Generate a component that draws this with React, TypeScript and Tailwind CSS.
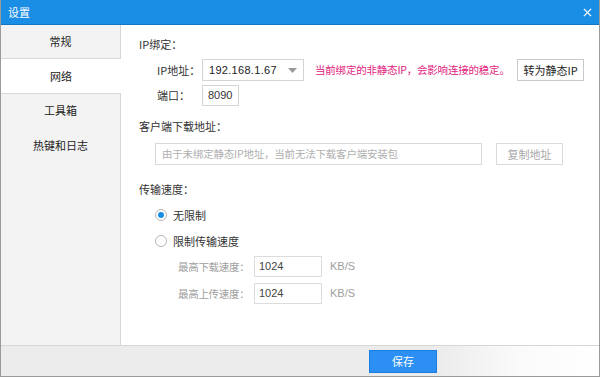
import React from "react";

const font = { fontFamily: '"Microsoft YaHei","Noto Sans CJK SC",sans-serif' };
const latin = { fontFamily: '"Liberation Sans",sans-serif' };

export default function App() {
  return (
    <div
      className="w-[600px] h-[377px] flex flex-col bg-white text-[11px] text-[#333] overflow-hidden border-l border-b border-r border-[#9a9a9a] whitespace-nowrap"
      style={font}
    >
      {/* Title bar */}
      <div className="h-[25px] shrink-0 bg-[#1a8de5] flex items-center justify-between pl-[7px] pr-[7px] text-white border-b border-[#1577c4]">
        <span className="text-[11px]">设置</span>
        <svg width="9" height="9" viewBox="0 0 10 10">
          <path d="M1 1 L9 9 M9 1 L1 9" stroke="white" strokeWidth="1.4" />
        </svg>
      </div>

      <div className="flex flex-1 min-h-0">
        {/* Sidebar */}
        <div className="w-[120px] shrink-0 bg-[#f3f3f3] border-r border-[#d6d6d6] flex flex-col text-[11px] text-[#222]">
          <div className="h-[34px] flex items-center justify-center border-b border-[#d9d9d9]">常规</div>
          <div className="h-[34px] flex items-center justify-center bg-white -mr-px">网络</div>
          <div className="h-[34px] flex items-center justify-center border-t border-[#d9d9d9]">工具箱</div>
          <div className="h-[36px] flex items-center justify-center">热键和日志</div>
        </div>

        {/* Content */}
        <div className="flex-1 pl-[18px] pr-[15px] pt-[11px] flex flex-col">
          <div className="h-[16px] flex items-center">IP绑定：</div>

          <div className="flex items-center mt-[7px] ml-[18px] h-[22px]">
            <span className="w-[45px] shrink-0">IP地址：</span>
            <div className="w-[102px] shrink-0 h-[22px] border border-[#d4d4d4] flex items-center justify-between pl-[6px] pr-[6px]">
              <span className="text-[11px] text-[#222] tracking-[0.3px]" style={latin}>192.168.1.67</span>
              <svg width="9" height="5" viewBox="0 0 9 5">
                <path d="M0 0 L9 0 L4.5 5 Z" fill="#9a9a9a" />
              </svg>
            </div>
            <span className="ml-[11px] text-[#e2217d] text-[10.5px] tracking-[-0.2px]">当前绑定的非静态IP，会影响连接的稳定。</span>
            <div className="ml-auto w-[67px] shrink-0 h-[22px] border border-[#c9c9c9] flex items-center justify-center text-[#222] bg-white">转为静态IP</div>
          </div>

          <div className="flex items-center mt-[4px] ml-[18px] h-[21px]">
            <span className="w-[45px] shrink-0">端口：</span>
            <div className="w-[37px] h-[21px] border border-[#d4d4d4] flex items-center pl-[5px] text-[11px]" style={latin}>8090</div>
          </div>

          <div className="mt-[12px] h-[16px] flex items-center">客户端下载地址：</div>

          <div className="flex items-center mt-[9px] ml-[16px]">
            <div className="w-[327px] shrink-0 h-[22px] border border-[#d9d9d9] flex items-center pl-[6px] text-[#b0b0b0] text-[10.5px] tracking-[-0.2px]">由于未绑定静态IP地址，当前无法下载客户端安装包</div>
            <div className="ml-[14px] w-[67px] shrink-0 h-[22px] border border-[#dcdcdc] flex items-center justify-center text-[#a8a8a8]">复制地址</div>
          </div>

          <div className="mt-[16px] h-[16px] flex items-center">传输速度：</div>

          <div className="flex items-center mt-[11px] ml-[16px] h-[14px]">
            <span className="w-[12px] h-[12px] rounded-full border border-[#b8b8b8] flex items-center justify-center">
              <span className="w-[6px] h-[6px] rounded-full bg-[#1a8de5]" />
            </span>
            <span className="ml-[6px]">无限制</span>
          </div>

          <div className="flex items-center mt-[12px] ml-[16px] h-[14px]">
            <span className="w-[12px] h-[12px] rounded-full border border-[#b8b8b8]" />
            <span className="ml-[6px]">限制传输速度</span>
          </div>

          <div className="flex items-center mt-[8px] ml-[39px] h-[21px] text-[#a0a0a0]">
            <span className="w-[76px] shrink-0 text-[10.5px] tracking-[-0.3px]">最高下载速度：</span>
            <div className="w-[68px] h-[21px] border border-[#dcdcdc] flex items-center pl-[4px] text-[11px] text-[#444]" style={latin}>1024</div>
            <span className="ml-[8px] text-[11px]" style={latin}>KB/S</span>
          </div>

          <div className="flex items-center mt-[6px] ml-[39px] h-[21px] text-[#a0a0a0]">
            <span className="w-[76px] shrink-0 text-[10.5px] tracking-[-0.3px]">最高上传速度：</span>
            <div className="w-[68px] h-[21px] border border-[#dcdcdc] flex items-center pl-[4px] text-[11px] text-[#444]" style={latin}>1024</div>
            <span className="ml-[8px] text-[11px]" style={latin}>KB/S</span>
          </div>
        </div>
      </div>

      {/* Footer */}
      <div className="h-[31px] shrink-0 bg-[#ececec] border-t border-[#d6d6d6] flex items-center">
        <div className="ml-[368px] w-[68px] h-[23px] bg-[#2b8ff3] border border-[#1b7de0] text-white text-[11px] flex items-center justify-center">保存</div>
        <div className="flex-1 h-full bg-gradient-to-r from-[#ececec] via-[#fafafa] to-white" />
      </div>
    </div>
  );
}
